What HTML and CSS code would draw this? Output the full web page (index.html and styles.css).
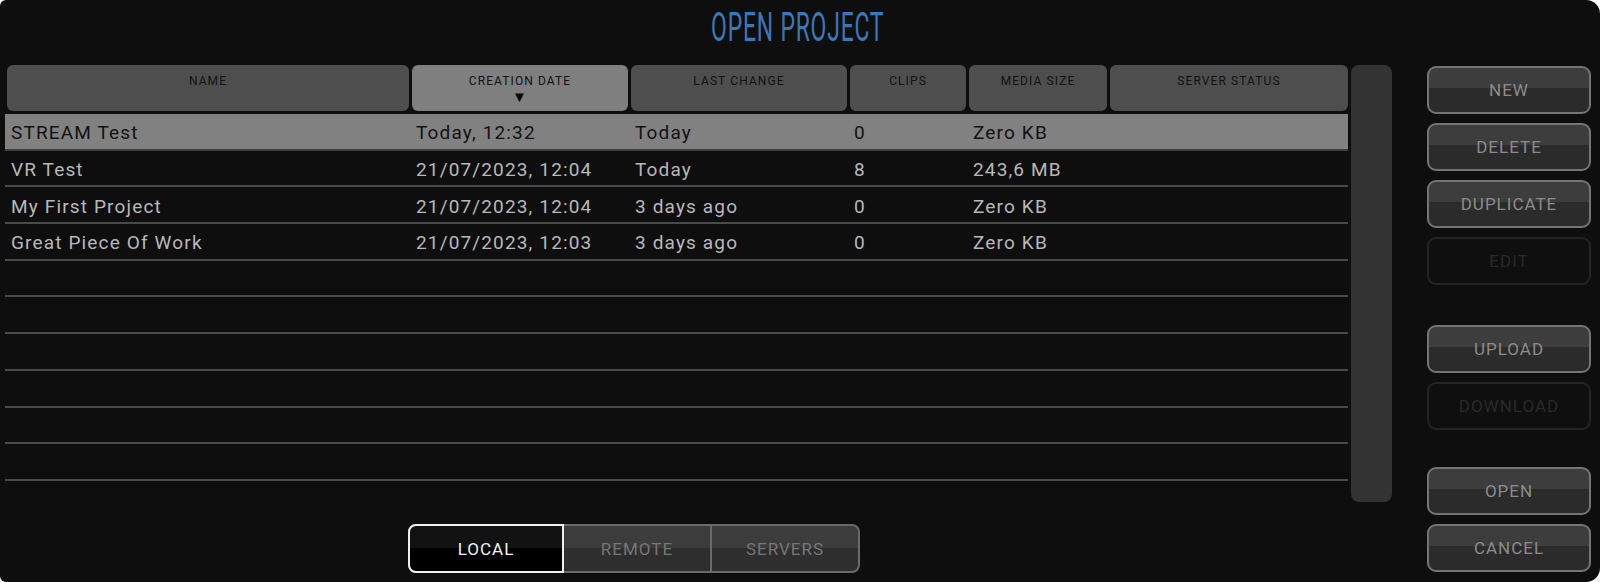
FILE: index.html
```html
<!DOCTYPE html>
<html>
<head>
<meta charset="utf-8">
<title>Open Project</title>
<link rel="stylesheet" href="styles.css">
</head>
<body>
<div class="window">
  <div class="title-bar"><h1 class="title">OPEN PROJECT</h1></div>
  <div class="content">
    <div class="main">
      <div class="list-area">
        <div class="table">
          <div class="thead">
            <div class="th">NAME</div>
            <div class="th active">CREATION DATE<span class="arrow">▼</span></div>
            <div class="th">LAST CHANGE</div>
            <div class="th">CLIPS</div>
            <div class="th">MEDIA SIZE</div>
            <div class="th">SERVER STATUS</div>
          </div>
          <div class="tbody">
            <div class="row selected"><span>STREAM Test</span><span>Today, 12:32</span><span>Today</span><span>0</span><span>Zero KB</span><span></span></div>
            <div class="row"><span>VR Test</span><span>21/07/2023, 12:04</span><span>Today</span><span>8</span><span>243,6 MB</span><span></span></div>
            <div class="row"><span>My First Project</span><span>21/07/2023, 12:04</span><span>3 days ago</span><span>0</span><span>Zero KB</span><span></span></div>
            <div class="row"><span>Great Piece Of Work</span><span>21/07/2023, 12:03</span><span>3 days ago</span><span>0</span><span>Zero KB</span><span></span></div>
            <div class="row"></div>
            <div class="row"></div>
            <div class="row"></div>
            <div class="row"></div>
            <div class="row"></div>
            <div class="row"></div>
          </div>
        </div>
        <div class="scrollbar"></div>
      </div>
      <div class="tabs">
        <div class="tab current">LOCAL</div>
        <div class="tab">REMOTE</div>
        <div class="tab">SERVERS</div>
      </div>
    </div>
    <div class="side">
      <div class="btn">NEW</div>
      <div class="btn">DELETE</div>
      <div class="btn">DUPLICATE</div>
      <div class="btn disabled">EDIT</div>
      <div class="btn gap1">UPLOAD</div>
      <div class="btn disabled">DOWNLOAD</div>
      <div class="btn gap2">OPEN</div>
      <div class="btn">CANCEL</div>
    </div>
  </div>
</div>
</body>
</html>
```
FILE: styles.css
```css
html, body {
  margin: 0;
  padding: 0;
  background: #ffffff;
}
body {
  font-family: Roboto, "Liberation Sans", sans-serif;
}
.window {
  width: 1600px;
  height: 582px;
  background: #0e0e0e;
  border-radius: 6px 14px 14px 6px;
  box-sizing: border-box;
  padding: 0 9px 0 5px;
  overflow: hidden;
}
.title-bar {
  height: 65px;
  display: flex;
  justify-content: center;
}
.title {
  margin: 0;
  padding-top: 3px;
  font-weight: 400;
  font-size: 41px;
  line-height: 48px;
  color: #3b78b7;
  letter-spacing: 1.4px;
  transform: scaleX(0.56);
  transform-origin: center top;
}
.content {
  display: flex;
}
.main {
  width: 1387px;
}
.list-area {
  display: flex;
  gap: 3px;
  height: 437px;
}
.table {
  width: 1343px;
}
.thead, .row {
  display: grid;
  grid-template-columns: 402px 216px 216px 116px 138px 238px;
  column-gap: 3px;
  padding-left: 2px;
}
.thead {
  height: 46px;
  margin-bottom: 3px;
}
.th {
  background: #4e4e4e;
  border-radius: 6px;
  color: #111111;
  font-size: 12px;
  font-weight: 400;
  letter-spacing: 1.1px;
  display: flex;
  flex-direction: column;
  align-items: center;
  padding-top: 9px;
  box-sizing: border-box;
}
.th.active {
  background: #7f7f7f;
}
.arrow {
  font-size: 15px;
  line-height: 14px;
  margin-top: 2px;
  color: #0a0a0a;
}
.row {
  height: 36.7px;
  box-sizing: border-box;
  padding-top: 3px;
  border-bottom: 2px solid #4a4a4a;
  align-items: center;
  font-size: 19px;
  color: #b8b8b8;
  letter-spacing: 1.15px;
}
.row span {
  padding-left: 4px;
  white-space: nowrap;
}
.row.selected {
  background: #818181;
  color: #121212;
  border-bottom-color: #3e3e3e;
}
.scrollbar {
  width: 41px;
  background: #333333;
  border-radius: 8px;
}
.tabs {
  display: flex;
  margin: 22px 0 0 403px;
  width: 452px;
  height: 49px;
  border: 2px solid #6a6a6a;
  border-radius: 8px;
  box-sizing: border-box;
  background: linear-gradient(#3c3c3c 0 48%, #2e2e2e 48%);
}
.tab {
  flex: 1;
  display: flex;
  align-items: center;
  justify-content: center;
  color: #777777;
  font-size: 17px;
  letter-spacing: 1px;
}
.tab + .tab {
  border-left: 2px solid #6a6a6a;
}
.tab.current {
  flex: 0 0 152px;
  margin: -2px 0 -2px -2px;
  border: 2px solid #efefef;
  border-radius: 8px 0 0 8px;
  background: linear-gradient(#121212 0 48%, #000000 48%);
  color: #f2f2f2;
}
.tab.current + .tab {
  border-left: none;
}
.side {
  margin-left: 35px;
  margin-top: 1px;
  width: 164px;
  display: flex;
  flex-direction: column;
  gap: 9px;
}
.btn {
  height: 48px;
  box-sizing: border-box;
  border: 2px solid #747474;
  border-radius: 9px;
  background: linear-gradient(#3d3d3d 0 45%, #2b2b2b 45%);
  color: #8c8c8c;
  font-size: 17px;
  letter-spacing: 1px;
  display: flex;
  align-items: center;
  justify-content: center;
}
.btn.disabled {
  border-color: #242424;
  background: #0f0f0f;
  color: #2a2a2a;
}
.btn.gap1 {
  margin-top: 31px;
}
.btn.gap2 {
  margin-top: 28px;
}
```
